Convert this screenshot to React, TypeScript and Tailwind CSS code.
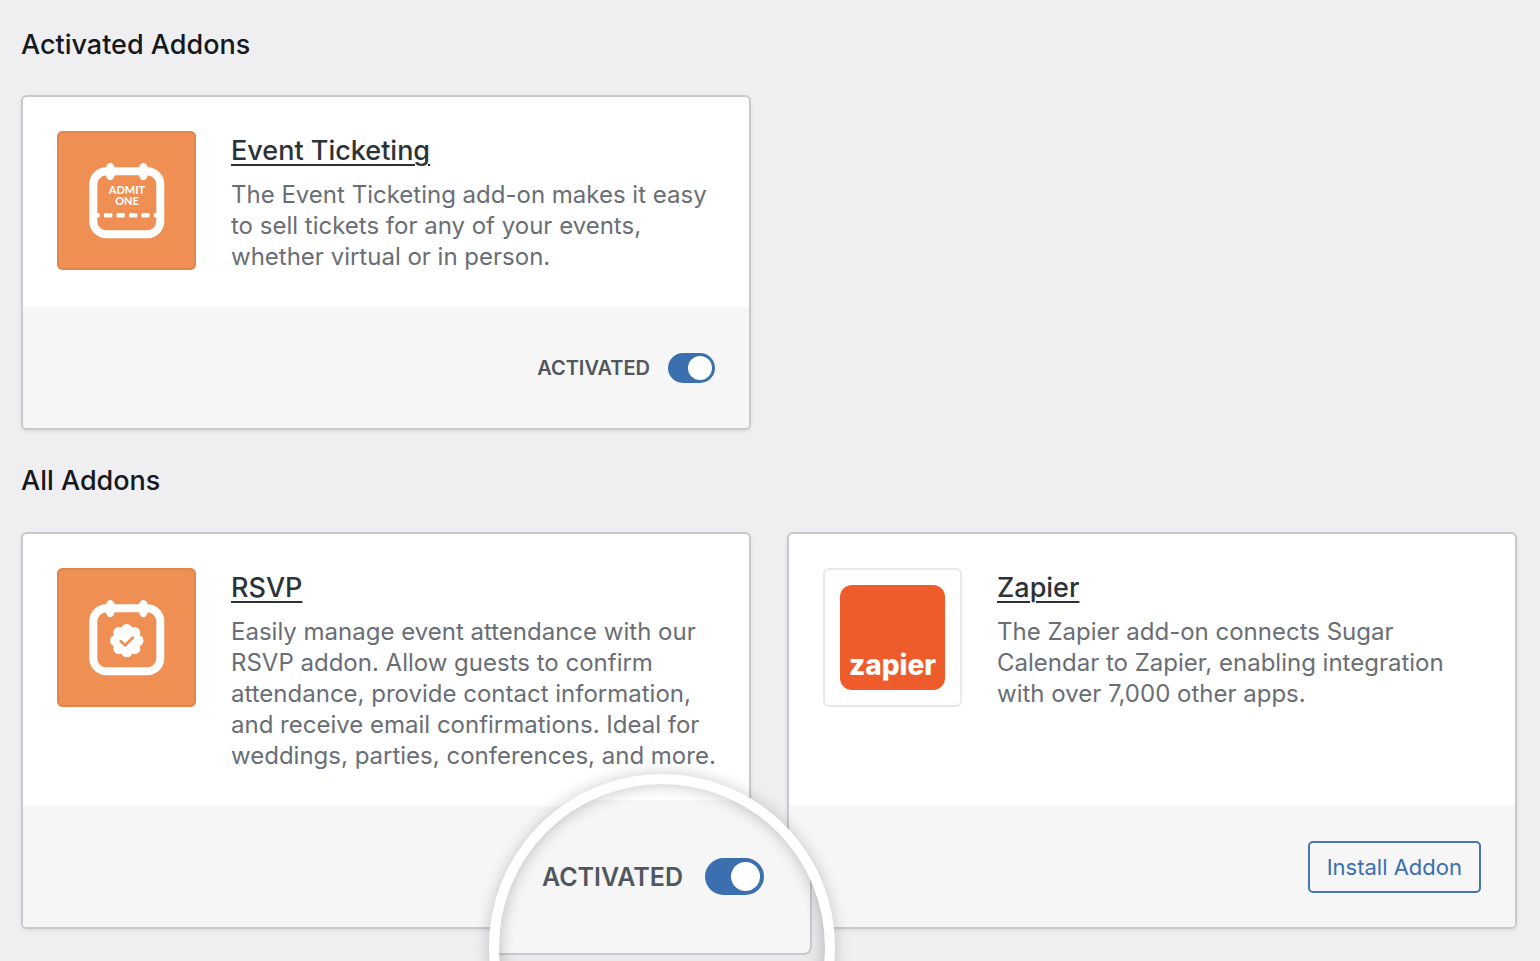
import type { ReactNode } from 'react';

function CalendarFrame({ children }: { children: ReactNode }) {
  return (
    <svg viewBox="0 0 139 139" className="size-full" aria-hidden="true">
      <rect x="36.300" y="40.300" width="67" height="63" rx="13" fill="none" stroke="#fff" strokeWidth="8" />
      <ellipse cx="53.300" cy="40.500" rx="4.900" ry="8.800" fill="#fff" />
      <ellipse cx="86.400" cy="40.500" rx="4.900" ry="8.800" fill="#fff" />
      {children}
    </svg>
  );
}

function TicketIcon() {
  return (
    <div className="size-[139px] shrink-0 overflow-hidden rounded-md bg-[#ef8f54] inset-ring-2 inset-ring-[#e0854c]">
      <CalendarFrame>
        <g fill="#fff" fontSize="11" fontWeight="700" fontFamily="Lato, sans-serif" textAnchor="middle">
          <text x="70" y="63">
            ADMIT
          </text>
          <text x="70" y="74">
            ONE
          </text>
        </g>
        <g fill="#fff">
          <rect x="39" y="82" width="3.700" height="4.400" rx="1.500" />
          <rect x="47" y="82" width="8.300" height="4.400" rx="1.500" />
          <rect x="59.500" y="82" width="8.300" height="4.400" rx="1.500" />
          <rect x="72" y="82" width="8.300" height="4.400" rx="1.500" />
          <rect x="84.400" y="82" width="8.300" height="4.400" rx="1.500" />
          <rect x="96.800" y="82" width="3.700" height="4.400" rx="1.500" />
        </g>
      </CalendarFrame>
    </div>
  );
}

function RsvpIcon() {
  return (
    <div className="size-[139px] shrink-0 overflow-hidden rounded-md bg-[#ef8f54] inset-ring-2 inset-ring-[#e0854c]">
      <CalendarFrame>
        <g fill="#fff">
          <circle cx="69.800" cy="72.600" r="13" />
          <circle cx="69.800" cy="61.600" r="5.700" />
          <circle cx="77.600" cy="64.800" r="5.700" />
          <circle cx="80.800" cy="72.600" r="5.700" />
          <circle cx="77.600" cy="80.400" r="5.700" />
          <circle cx="69.800" cy="83.600" r="5.700" />
          <circle cx="62" cy="80.400" r="5.700" />
          <circle cx="58.800" cy="72.600" r="5.700" />
          <circle cx="62" cy="64.800" r="5.700" />
        </g>
        <path d="M63.800 73.300l4.300 4 7.700-7.500" fill="none" stroke="#ef8f54" strokeWidth="2.800" strokeLinecap="round" strokeLinejoin="round" />
      </CalendarFrame>
    </div>
  );
}

function ZapierIcon() {
  return (
    <div className="size-[139px] shrink-0 rounded-md border-2 border-[#e9e9ea] bg-white p-[15px]">
      <div className="flex size-full items-end justify-center rounded-xl bg-[#ee5c2b] pb-2">
        <span className="text-[28px] leading-[34px] font-extrabold text-white">zapier</span>
      </div>
    </div>
  );
}

interface AddonCardProps {
  title: string;
  description: string;
  icon: ReactNode;
  footer?: ReactNode;
  children?: ReactNode;
}

function AddonCard({ title, description, icon, footer, children }: AddonCardProps) {
  return (
    <article className="relative flex flex-col rounded-md border-2 border-[#c8c9cd] bg-white shadow-[0_2px_4px_rgba(0,0,0,0.07)]">
      <div className="flex flex-1 gap-[35px] px-[34px] pt-[34px] pb-[35px]">
        {icon}
        <div className="min-w-0 flex-1">
          <h3 className="text-[27px] leading-10 font-medium text-[#2c3338]">
            <a href="#" className="underline decoration-2 underline-offset-4">
              {title}
            </a>
          </h3>
          <p className="mt-2 -mr-2 text-2xl leading-[31px] text-[#6a6e74]">{description}</p>
        </div>
      </div>
      <div className="flex h-[121px] items-center justify-end rounded-b bg-[#f6f6f6] px-[34px]">{footer}</div>
      {children}
    </article>
  );
}

function ActivatedToggle() {
  return (
    <label className="flex items-center gap-[18px] text-xl leading-8 font-semibold text-[#50575e]">
      ACTIVATED
      <input
        type="checkbox"
        role="switch"
        defaultChecked
        className="flex h-[30px] w-[47px] appearance-none items-center rounded-full bg-[#3b6fb0] px-[3px] before:size-6 before:rounded-full before:bg-white checked:justify-end"
      />
    </label>
  );
}

// round magnifier over the lower right corner of a card
function Lens() {
  return (
    <div className="absolute -right-[86px] -bottom-[193px] z-10 size-[346px] overflow-hidden rounded-full border-10 border-white bg-[#e9e9eb] shadow-[0_0_16px_rgba(0,0,0,0.2)] after:pointer-events-none after:absolute after:inset-0 after:rounded-full after:shadow-[inset_0_0_16px_rgba(0,0,0,0.25)]">
      <div className="mr-[13px] rounded-br-lg border-r-2 border-b-2 border-[#c8c9cd] bg-[#f6f6f6]">
        <div className="h-4 bg-white" />
        <label className="flex h-[153px] items-center justify-end gap-[22px] pr-[46px] text-[25px] leading-10 font-semibold text-[#50575e]">
          ACTIVATED
          <input
            type="checkbox"
            role="switch"
            defaultChecked
            className="flex h-[37px] w-[59px] appearance-none items-center rounded-full bg-[#3b6fb0] px-1 before:size-[29px] before:rounded-full before:bg-white checked:justify-end"
          />
        </label>
      </div>
    </div>
  );
}

export default function App() {
  return (
    <main className="min-h-screen overflow-hidden bg-[#efeff1] pt-[25px] pr-[23px] pb-[31px] pl-[21px] font-[Inter,'Liberation_Sans',sans-serif]">
      <section>
        <h2 className="text-[27px] leading-10 font-medium text-[#15191d]">Activated Addons</h2>
        <div className="mt-[30px] grid grid-cols-2 gap-9">
          <AddonCard
            title="Event Ticketing"
            description="The Event Ticketing add-on makes it easy to sell tickets for any of your events, whether virtual or in person."
            icon={<TicketIcon />}
            footer={<ActivatedToggle />}
          />
        </div>
      </section>

      <section className="mt-[31px]">
        <h2 className="text-[27px] leading-10 font-medium text-[#15191d]">All Addons</h2>
        <div className="mt-[31px] grid grid-cols-2 gap-9">
          <AddonCard
            title="RSVP"
            description="Easily manage event attendance with our RSVP addon. Allow guests to confirm attendance, provide contact information, and receive email confirmations. Ideal for weddings, parties, conferences, and more."
            icon={<RsvpIcon />}
          >
            <Lens />
          </AddonCard>
          <AddonCard
            title="Zapier"
            description="The Zapier add-on connects Sugar Calendar to Zapier, enabling integration with over 7,000 other apps."
            icon={<ZapierIcon />}
            footer={
              <button type="button" className="h-[52px] rounded-[5px] border-2 border-[#4276b5] px-[17px] pt-0.5 text-[22px] text-[#3b6fb0]">
                Install Addon
              </button>
            }
          />
        </div>
      </section>
    </main>
  );
}
